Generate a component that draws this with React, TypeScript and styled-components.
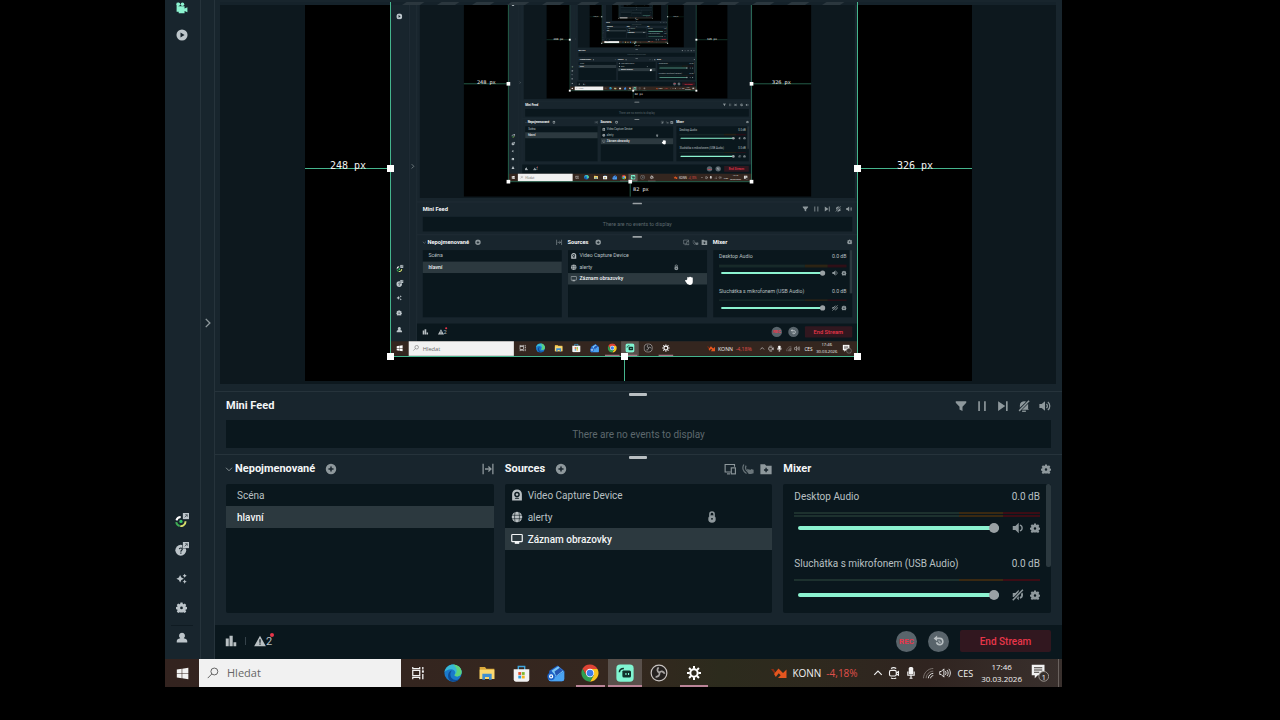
import React from 'react';
import styled, { createGlobalStyle } from 'styled-components';

const color = {
  base: '#18252d',
  section: '#0a171d',
  display: '#0d181e',
  line: '#26333b',
  selected: '#2c393f',
  title: '#f4f6f7',
  text: '#b9c0c3',
  icon: '#8e989c',
  navIcon: '#bcc5ca',
  teal: '#8cf3d0',
  guide: '#45b48d',
  knob: '#9aa1a4',
  red: '#e8364a',
};

const ui = "Roboto, 'Liberation Sans', sans-serif";
const taskFont = "'Open Sans', 'Noto Sans', sans-serif";
const mono = "'DejaVu Sans Mono', 'Liberation Mono', monospace";

const GlobalStyle = createGlobalStyle`
  *, *::before, *::after { box-sizing: border-box; }
  body { margin: 0; background: #000; font-family: ${ui}; }
  button, input { font: inherit; color: inherit; }
  button { border: 0; padding: 0; background: none; cursor: pointer; }
  h2, ul, p { margin: 0; padding: 0; }
  ul { list-style: none; }
  svg { display: block; flex: none; }
`;

/* ---------- icons ---------- */

type IconProps = { size?: number; x?: number; y?: number; color?: string };

const makeIcon = (box: number, content: React.ReactNode) =>
  function Icon({ size = 12, x, y, color: c }: IconProps) {
    return (
      <svg x={x} y={y} width={size} height={size} viewBox={`0 0 ${box} ${box}`} fill="currentColor" color={c} aria-hidden="true">
        {content}
      </svg>
    );
  };

const Camera = makeIcon(16, (
  <>
    <circle cx="3.2" cy="3" r="2.4" />
    <circle cx="8.6" cy="3" r="2.4" />
    <path d="M.8 1h2.400v5H.8zM.8 5.500h10.600v3l3.800-1.500v6.600l-3.800-1.500V15H3.600v-2H.8z" />
  </>
));
const PlayCircle = makeIcon(16, <path fillRule="evenodd" d="M8 .6a7.4 7.4 0 1 0 0 14.8A7.4 7.4 0 0 0 8 .6zM6 4.6 11.4 8 6 11.4z" />);
const ExternalBox = (
  <>
    <rect x="9" y="0" width="7" height="7" />
    <path d="M11 5l3-3m-2.4 0H14v2.4" stroke="#4a565d" strokeWidth="1" fill="none" />
  </>
);
const Orbit = makeIcon(16, (
  <>
    <path d="M1.6 8.4A5.4 5.4 0 0 1 6.5 4.6" fill="none" stroke="#fff" strokeWidth="2.2" />
    <path d="M1.4 10.4a5.4 5.4 0 0 0 4 4.4" fill="none" stroke="#3fae55" strokeWidth="2.2" />
    <path d="M6 15a5.4 5.4 0 0 0 6-5.6" fill="none" stroke="#d8e06c" strokeWidth="2.2" />
    <circle cx="6.8" cy="9.6" r="1.9" fill="#35c568" />
    {ExternalBox}
  </>
));
const Help = makeIcon(16, (
  <>
    <circle cx="6.6" cy="9.4" r="6.2" />
    <path d="M5 8.2c.2-2 3.6-1.7 3.300.2C8.100 9.500 6.700 9.500 6.700 11m0 1v1.300" stroke="#18252d" strokeWidth="1.300" fill="none" />
    <rect x="8.400" y="-.6" width="8" height="8" fill="#18252d" />
    {ExternalBox}
  </>
));
const Sparkles = makeIcon(16, (
  <path d="M6 3 7.800 6.600 11.400 8.400 7.800 10.200 6 13.800 4.200 10.200.6 8.400 4.200 6.600zM12.600 1l1 2 2 1-2 1-1 2-1-2-2-1 2-1zM12.600 9.600l1 2 2 1-2 1-1 2-1-2-2-1 2-1z" />
));
const Gear = makeIcon(16, (
  <path fillRule="evenodd" d="M6.500 .8h3l.5 2 1 .4 1.800-1.100 2.100 2.100-1.100 1.800.4 1 2 .5v3l-2 .5-.4 1 1.100 1.800-2.100 2.100L11 14.800l-1 .4H6l-1-.4-1.800 1.100-2.100-2.100L2.200 12l-.4-1-2-.5v-3l2-.5.4-1L1.100 4.200l2.100-2.100L5 3.200l1-.4zM8 6.600a2 2 0 1 0 0 4 2 2 0 0 0 0-4z" />
));
const Person = makeIcon(16, <path d="M8 1a4 4 0 0 1 2.400 7.200C13.400 8.800 15 10.200 15 12v2H1v-2c0-1.800 1.600-3.200 4.600-3.800A4 4 0 0 1 8 1z" />);
const ChevronRight = makeIcon(16, <path d="M5 2.500 10.500 8 5 13.500" fill="none" stroke="currentColor" strokeWidth="1.800" />);
const ChevronDown = makeIcon(16, <path d="M2 5.500 8 11.500 14 5.500" fill="none" stroke="currentColor" strokeWidth="1.800" />);
const PlusCircle = makeIcon(16, <path fillRule="evenodd" d="M8 1a7 7 0 1 0 0 14A7 7 0 0 0 8 1zM7 4.600h2V7h2.400v2H9v2.400H7V9H4.600V7H7z" />);
const FitWidth = makeIcon(16, <path d="M1.500 1v14M14.500 1v14M4 8h7.500M8.500 4.600 12 8l-3.500 3.400" fill="none" stroke="currentColor" strokeWidth="1.700" />);
const DualScreen = makeIcon(16, (
  <>
    <path d="M9 12H1.500V2H14v3" fill="none" stroke="currentColor" strokeWidth="1.500" />
    <path d="M4 14.500h4" stroke="currentColor" strokeWidth="1.500" />
    <rect x="9.700" y="6.500" width="5.500" height="8" fill="none" stroke="currentColor" strokeWidth="1.500" />
  </>
));
const Broadcast = makeIcon(16, (
  <>
    <path d="M2.500 2C0 6 1 11 6 14M5.500 3.500c-1.500 3-.5 6 2 8" fill="none" stroke="currentColor" strokeWidth="1.600" />
    <path d="M7 7.500l2 1 3 .5v-1l3.500 1v4.500L12 14.500H9L7 12z" />
  </>
));
const FolderPlus = makeIcon(16, <path fillRule="evenodd" d="M.5 1.500h6l1.800 2h7.200v11.500H.5zM7.200 6.400v2H5.300v1.800h1.900v2H9v-2h1.900V8.400H9v-2z" />);
const Funnel = makeIcon(16, <path d="M1 1.500h14v2.200L10 9v5.500l-4-2V9L1 3.700z" />);
const Pause = makeIcon(16, <path d="M3 1.500h2.200v13H3zM10.800 1.500H13v13h-2.200z" />);
const SkipNext = makeIcon(16, <path d="M1.500 1.500 11 8l-9.500 6.500zM12 1.500h2.200v13H12z" />);
const AlertOff = makeIcon(16, (
  <>
    <path d="M2.500 12V7c0-6 9-7.500 11-2v7l1.300 1H2.500z" />
    <path d="M5.500 15h5" stroke="currentColor" strokeWidth="1.800" />
    <path d="M15.500.5.8 14.800" stroke="#18252d" strokeWidth="4" />
    <path d="M14.800 1 1.500 14.500" stroke="currentColor" strokeWidth="1.900" />
  </>
));
const Speaker = makeIcon(16, (
  <>
    <path d="M.5 5.300h3L8 1.800v12.400l-4.500-3.500h-3z" />
    <path d="M10 5.200c1.500 1.500 1.500 4.100 0 5.600M11.800 2.600c3.400 2.600 3.400 8.200 0 10.800" fill="none" stroke="currentColor" strokeWidth="1.700" />
  </>
));
const SpeakerOne = makeIcon(16, (
  <>
    <path d="M1 5.300h3.500L9 1v14l-4.500-4.300H1z" />
    <path d="M10.500 4.200c4 1 4 6.600 0 7.600" fill="none" stroke="currentColor" strokeWidth="1.800" />
  </>
));
const SpeakerOff = makeIcon(16, (
  <>
    <path d="M1 5.300h3.500L9 1v14l-4.500-4.300H1z" />
    <path d="M10.500 4.200c4 1 4 6.600 0 7.600" fill="none" stroke="currentColor" strokeWidth="2.400" />
    <path d="M15 .5.5 15.500" stroke="#0a171d" strokeWidth="4" />
    <path d="M14.500 1 1 15" stroke="currentColor" strokeWidth="2" />
  </>
));
const Webcam = makeIcon(16, <path fillRule="evenodd" d="M8 .8c3.800 0 6.500 2.500 6.500 6v8.400h-13V6.800c0-3.500 2.700-6 6.500-6zm0 2.800a3.700 3.700 0 1 0 0 7.400 3.700 3.700 0 0 0 0-7.400zm0 1.900a1.800 1.800 0 1 1 0 3.600 1.800 1.800 0 0 1 0-3.600zM5 13h6l-1-1.200H6z" />);
const Globe = makeIcon(16, (
  <>
    <circle cx="8" cy="8" r="7" />
    <path d="M1 5.700h14M1 10.300h14M5.500 1.500C4.500 5 4.500 11 5.500 14.500M10.500 1.500c1 3.500 1 9.500 0 13" fill="none" stroke="#0a171d" strokeWidth=".8" />
  </>
));
const Monitor = makeIcon(16, (
  <>
    <rect x="1" y="2" width="14" height="9.500" rx="1" fill="none" stroke="currentColor" strokeWidth="1.600" />
    <path d="M5 12h6v2.500H5z" />
  </>
));
const Lock = makeIcon(16, (
  <>
    <path d="M5.200 6.500V4.200a2.800 2.800 0 0 1 5.600 0v2.300" fill="none" stroke="currentColor" strokeWidth="2" />
    <path fillRule="evenodd" d="M8 5.500a5 5 0 1 1 0 10 5 5 0 0 1 0-10zM8 9.200a1.300 1.300 0 1 0 0 2.600 1.300 1.300 0 0 0 0-2.600z" />
  </>
));
const Bars = makeIcon(16, <path d="M1 4.500h4V15H1zM6 1h4.300v14H6zM11.300 9.500H15V15h-3.700z" />);
const Warning = makeIcon(16, <path fillRule="evenodd" d="M8 1 15.800 15H.2zM7.200 5.800v4.500h1.600V5.800zm0 5.500v1.700h1.600v-1.700z" />);
const Replay = makeIcon(16, (
  <>
    <path d="M3 4.500h6a4.200 4.200 0 1 1-4.200 5.200" fill="none" stroke="currentColor" strokeWidth="2.200" />
    <path d="M5.500.8v7.400L.8 4.500z" />
    <path d="M8 7v2.500h2.500" fill="none" stroke="currentColor" strokeWidth="1.300" />
  </>
));

const Windows = makeIcon(16, <path d="M1 3.100 7 2.200v5.400H1zM7.700 2.100 15.200 1v6.600H7.700zM1 8.300h6v5.400l-6-.9zM7.700 8.300h7.500V15l-7.500-1.100z" />);
const Search = makeIcon(16, (
  <>
    <circle cx="9.800" cy="6" r="4.600" fill="none" stroke="currentColor" strokeWidth="1.200" />
    <path d="M6.400 9.300 1 14.800" stroke="currentColor" strokeWidth="1.200" />
  </>
));
const TaskView = makeIcon(16, (
  <>
    <path d="M2 1v2h8V1M2 15v-2h8v2" fill="none" stroke="currentColor" strokeWidth="1.400" />
    <rect x="2" y="5" width="8" height="6" fill="none" stroke="currentColor" strokeWidth="1.400" />
    <path d="M13.500 1v3M13.500 9v6" stroke="currentColor" strokeWidth="1.500" />
    <rect x="12.500" y="5" width="2.200" height="2.600" />
  </>
));
const Edge = makeIcon(24, (
  <>
    <circle cx="12" cy="12" r="11.500" fill="#1a79cb" />
    <path d="M.6 11C1.800 4 7 .5 12 .5c6.800 0 11.500 5 11.500 10.200 0 4-3 5.800-5.800 5.800-2.600 0-3.900-1-3.500-2.300.5-1 .8-1.500.8-2.900 0-2.500-2.600-4.300-5.500-4.300C5.500 7 2 8.800.6 11z" fill="#37b9d6" />
    <path d="M12 .5c6.800 0 11.500 5 11.500 10.200 0 4-3 5.800-5.800 5.800-2.600 0-3.900-1-3.500-2.300C18 12 18.500 5 12 .5z" fill="#5fd37a" />
    <path d="M8.500 13c-.5 4.500 3 8.500 7.800 8.200 2.400 0 4-1 5-2-2 3-5.500 4.600-9.600 4.200C7.500 22.700 5 19 5.500 14.500 6 11 8.500 9 10.500 8.800 9.500 9.800 8.700 11.200 8.500 13z" fill="#0d4c97" />
  </>
));
const Folder = makeIcon(24, (
  <>
    <path d="M1 3h8l2 2.500h12V21H1z" fill="#dba93a" />
    <path d="M1 7h22v14H1z" fill="#f9d871" />
    <path d="M5 13h14v9h-4v-4H9v4H5z" fill="#3f8fd2" />
  </>
));
const Store = makeIcon(24, (
  <>
    <path d="M7.500 7V2h9v5" fill="none" stroke="#41a5dc" strokeWidth="2" />
    <path d="M1 6h22v14.500a3 3 0 0 1-3 3H4a3 3 0 0 1-3-3z" fill="#f3f3f3" />
    <path d="M7.500 10h4v4h-4z" fill="#e0512c" />
    <path d="M12.500 10h4v4h-4z" fill="#7db82f" />
    <path d="M7.500 15h4v4h-4z" fill="#2b9fe0" />
    <path d="M12.500 15h4v4h-4z" fill="#f3b51d" />
  </>
));
const Mail = makeIcon(24, (
  <>
    <path d="M3 9 14 2l9 7v11a3 3 0 0 1-3 3H5a3 3 0 0 1-3-3z" fill="#1f5fc4" />
    <path d="M6 9 15 3l7 7-10 7z" fill="#7cc8f5" />
    <path d="M10 10l7-5 4 4-9 7z" fill="#2457b5" />
    <path d="M3 13l9 4L23 9.500V20a3 3 0 0 1-3 3H5a3 3 0 0 1-3-3z" fill="#4aa3f2" />
    <circle cx="5.500" cy="16.500" r="5" fill="#1c63c9" />
    <circle cx="5.500" cy="16.500" r="2" fill="none" stroke="#fff" strokeWidth="1.600" />
  </>
));
const Chrome = makeIcon(24, (
  <>
    <path d="M2 6.300a11.500 11.500 0 0 1 20 .2H12L7 15z" fill="#df4435" />
    <path d="M22 6.500A11.500 11.500 0 0 1 12 23.500L17 14.800 12 6.500z" fill="#f9c51f" />
    <path d="M12 23.500A11.500 11.500 0 0 1 2 6.300L7 15h10z" fill="#2e9e50" />
    <circle cx="12" cy="12" r="5.600" fill="#fff" />
    <circle cx="12" cy="12" r="4.500" fill="#3d7de8" />
  </>
));
const Streamlabs = makeIcon(24, (
  <>
    <rect x=".5" y=".5" width="23" height="23" rx="5" fill="#80f5d2" />
    <path d="M4.500 11c0-3.500 2.500-5 6-5" fill="none" stroke="#12302b" strokeWidth="2" />
    <path d="M9.500 8.500h8.500a2 2 0 0 1 2 2v5.500a2 2 0 0 1-2 2h-7.500a2 2 0 0 1-2-2v-6.500z" fill="#12302b" />
    <path d="M12.500 12h1.500v2.500h-1.500zM16 12h1.500v2.500H16z" fill="#80f5d2" />
  </>
));
const Obs = makeIcon(24, (
  <>
    <circle cx="12" cy="12" r="10.500" fill="#25211f" stroke="#c9c4c2" strokeWidth="1.600" />
    <path d="M12.500 11.500C9.500 10.500 9 7 11.500 4.500M12.500 11.500c2-2.500 5.500-2 7 1.500M12.500 11.500c1 3-1.500 6-5 5.500" fill="none" stroke="#a9a5a3" strokeWidth="2.400" />
  </>
));
const Settings = makeIcon(24, (
  <>
    <circle cx="12" cy="12" r="5.500" fill="none" stroke="#fff" strokeWidth="3" />
    <path d="M12 1.500v4M12 18.500v4M1.500 12h4M18.500 12h4M4.600 4.600l2.800 2.800M16.600 16.600l2.800 2.800M4.600 19.400l2.800-2.800M16.600 7.400l2.800-2.800" stroke="#fff" strokeWidth="3" />
  </>
));
const Stock = makeIcon(16, (
  <>
    <path d="M0 4h2.500L5 8H3z" fill="#8c2c12" />
    <path d="M3 9 7.500 3.500 12 8l3.500-3.500V13H7l2.700-2.700L7.700 8.300 4.800 12z" fill="#e4561f" />
  </>
));
const ChevronUp = makeIcon(16, <path d="M2 11 8 5l6 6" fill="none" stroke="currentColor" strokeWidth="1.800" />);
const MeetNow = makeIcon(16, (
  <>
    <rect x="2" y="4.500" width="9" height="7.500" rx="2" fill="none" stroke="currentColor" strokeWidth="1.500" />
    <path d="M11 8l3-2v5l-3-2M4 2c2-1.300 5-1.300 7 0M4 14.500c2 1.300 5 1.300 7 0" fill="none" stroke="currentColor" strokeWidth="1.400" />
  </>
));
const Mic = makeIcon(16, (
  <>
    <rect x="5" y="0" width="6" height="10" rx="2" />
    <path d="M3.800 6v5h8.400V6M8 11v4M6 15h4" fill="none" stroke="currentColor" strokeWidth="1.600" />
  </>
));
const Wifi = makeIcon(16, (
  <>
    <path d="M2 15C2 8 8 2 15 2M5.500 15c0-5 4.500-9.500 9.500-9.500" fill="none" stroke="#857d78" strokeWidth="1.200" />
    <path d="M8.500 15C8.500 11.500 11.500 8.500 15 8.500M11.500 15c0-2 1.500-3.500 3.500-3.500" fill="none" stroke="currentColor" strokeWidth="1.200" />
  </>
));
const Volume = makeIcon(16, (
  <>
    <path d="M1 6h2l3.500-3.500v11L3 10H1z" fill="none" stroke="currentColor" strokeWidth="1.200" />
    <path d="M8.500 5.500c1.200 1.500 1.200 3.500 0 5M10.700 4c2 2.300 2 5.700 0 8M13 2.500c2.800 3 2.800 8 0 11" fill="none" stroke="currentColor" strokeWidth="1.200" />
  </>
));
const Notice = makeIcon(24, (
  <>
    <path d="M1 1h17v14H9l-4 4v-4H1z" />
    <path d="M4 5h11M4 8h11M4 11h7" stroke="#37302c" strokeWidth="1.300" />
    <circle cx="17" cy="16.500" r="6.500" fill="#37302c" stroke="#a59f9b" strokeWidth="1.200" />
  </>
));
const Hand = makeIcon(16, <path d="M4 6.500V4c0-1.300 1.600-1.300 1.800 0C6 2 7.600 2 8 3.400 8.500 2 10.300 2.200 10.500 4c.4-1 2-.8 2 .7v5.800c0 3-2 4.500-4.500 4.500C5 15 4 13.500 2.500 11.500L.8 9C.5 7.800 1.700 7.200 2.600 8z" />);

/* ---------- shared content ---------- */

const scenes = [
  { name: 'Scéna', on: false },
  { name: 'hlavní', on: true },
];
const sources = [
  { name: 'Video Capture Device', Icon: Webcam, on: false, locked: false },
  { name: 'alerty', Icon: Globe, on: false, locked: true },
  { name: 'Záznam obrazovky', Icon: Monitor, on: true, locked: false },
];
const channels = [
  { name: 'Desktop Audio', bars: 2, muted: false },
  { name: 'Sluchátka s mikrofonem (USB Audio)', bars: 1, muted: true },
];
const feedTools = [
  { label: 'Filter', Icon: Funnel },
  { label: 'Pause', Icon: Pause },
  { label: 'Skip', Icon: SkipNext },
  { label: 'Mute alerts', Icon: AlertOff },
  { label: 'Volume', Icon: Speaker },
];
const navTop = [
  { label: 'Editor', Icon: Camera, tint: color.teal },
  { label: 'Recordings', Icon: PlayCircle, tint: color.navIcon },
];
const navBottom = [
  { label: 'Dashboard', Icon: Orbit, size: 14 },
  { label: 'Help', Icon: Help, size: 14 },
  { label: 'AI', Icon: Sparkles, size: 11 },
  { label: 'Settings', Icon: Gear, size: 11 },
];
const apps = [
  { label: 'Task view', Icon: TaskView, size: 14, state: '' },
  { label: 'Edge', Icon: Edge, size: 18, state: '' },
  { label: 'Explorer', Icon: Folder, size: 16, state: '' },
  { label: 'Store', Icon: Store, size: 17, state: '' },
  { label: 'Mail', Icon: Mail, size: 18, state: '' },
  { label: 'Chrome', Icon: Chrome, size: 18, state: 'open' },
  { label: 'Streamlabs', Icon: Streamlabs, size: 18, state: 'active' },
  { label: 'OBS', Icon: Obs, size: 18, state: '' },
  { label: 'Settings', Icon: Settings, size: 16, state: 'open' },
];

/* ---------- editor canvas: the captured desktop shows itself, level after level ---------- */

const DEPTH = 5;
const HANDLES = [[222, 165], [689, 165], [222, 353], [456, 353], [689, 353]];

function Stage({ level }: { level: number }) {
  /* in the captured frames the source still sits 4px higher on its canvas */
  const lift = level > 0 ? 4 : 0;
  return (
    <>
      <rect x="55" y="2" width="836" height="382" fill={color.display} />
      <rect x="140" y="5" width="667" height="376" fill="#000" />
      {level < DEPTH && (
        <svg x="226" y={-2 - lift} width="467" height="358" viewBox="0 0 897 687">
          <CapturedDesktop level={level + 1} />
        </svg>
      )}
      <rect x="55" y="2" width="836" height="3" fill="#15222a" />
      {Array.from({ length: 13 }, (_, i) => (
        <path key={i} d={`M${243 + i * 35} 1h18l-6 4h-18z`} fill="#2b373e" />
      ))}
      <g transform={`translate(0 ${-lift})`}>
        <path
          d={`M225.500 2V356.500H692.500V2M140 168.500H226M693 168.500H807M459.500 356V${381 + lift}`}
          fill="none"
          stroke={color.guide}
          shapeRendering={level ? 'auto' : 'crispEdges'}
        />
        {HANDLES.map(([x, y]) => (
          <rect key={`${x}-${y}`} x={x} y={y} width="7" height="7" fill="#fff" />
        ))}
        {level < DEPTH && (
          <g fill="#f2f2f2" fontFamily={mono} fontSize="10">
            <text x="165" y="169">248 px</text>
            <text x="732" y="169">326 px</text>
            {level > 0 && <text x="465" y="374">82 px</text>}
          </g>
        )}
      </g>
    </>
  );
}

function CapturedTexts() {
  return (
    <>
      <g fill={color.title} fontFamily={ui} fontSize="11" fontWeight="700">
        <text x="61" y="409">Mini Feed</text>
        <text x="70" y="472">Nepojmenované</text>
        <text x="339" y="472">Sources</text>
        <text x="618" y="472">Mixer</text>
      </g>
      <text x="473" y="438" fill="#5d686d" fontFamily={ui} fontSize="10" textAnchor="middle">There are no events to display</text>
      <g fontFamily={ui} fontSize="10" fill={color.text}>
        {scenes.map(({ name, on }, i) => (
          <text key={name} x="72" y={498 + i * 22} fill={on ? color.title : undefined} fontWeight={on ? 500 : 400}>{name}</text>
        ))}
        {sources.map(({ name, on }, i) => (
          <text key={name} x="362" y={498 + i * 22} fill={on ? color.title : undefined} fontWeight={on ? 500 : 400}>{name}</text>
        ))}
        {channels.map(({ name }, i) => (
          <React.Fragment key={name}>
            <text x="630" y={500 + i * 67}>{name}</text>
            <text x="875" y={500 + i * 67} textAnchor="end">0.0 dB</text>
          </React.Fragment>
        ))}
      </g>
      <text x="101" y="645" fill={color.text} fontFamily={ui} fontSize="11">2</text>
      <text x="741" y="644" fill={color.red} fontFamily={ui} fontSize="8" fontWeight="700" textAnchor="middle">REC</text>
      <text x="840" y="645" fill={color.red} fontFamily={ui} fontSize="11" fontWeight="500" textAnchor="middle">End Stream</text>
      <text x="61" y="677" fill="#666" fontFamily={taskFont} fontSize="11">Hledat</text>
      <g fill="#f2f2f2" fontFamily={taskFont} fontSize="10">
        <text x="628" y="677">KONN</text>
        <text x="662" y="677" fill="#e0504b">-4,18%</text>
        <text x="794" y="677" fontSize="9">CES</text>
        <text x="837" y="669" fontSize="8" textAnchor="middle">17:46</text>
        <text x="837" y="682" fontSize="8" textAnchor="middle">30.03.2026</text>
      </g>
    </>
  );
}

function CapturedDesktop({ level }: { level: number }) {
  return (
    <>
      <rect width="897" height="687" fill={color.base} />
      <path d="M35.500 0V659M49.500 0V659M50 391.500H897M50 454.500H897" stroke={color.line} fill="none" />
      {navTop.map(({ label, Icon, tint }, i) => <Icon key={label} x={10} y={2 + i * 27} color={tint} />)}
      {navBottom.map(({ label, Icon, size }, i) => <Icon key={label} x={10} y={512 + i * 29} size={size} color={color.navIcon} />)}
      <Person x={10} y={631} color={color.navIcon} />
      <ChevronRight x={36} y={317} color={color.icon} />

      <svg x="55" y="2" width="836" height="382" viewBox="55 2 836 382">
        <Stage level={level} />
      </svg>

      <g fill={color.section}>
        <rect x="61" y="420" width="825" height="28" />
        <rect x="61" y="484" width="267" height="129" />
        <rect x="340" y="484" width="267" height="129" />
        <rect x="619" y="484" width="267" height="129" />
        <rect x="50" y="625" width="847" height="34" />
      </g>
      <g fill={color.knob}>
        <rect x="464" y="393" width="18" height="3" rx="1" />
        <rect x="464" y="457" width="18" height="3" rx="1" />
      </g>
      {feedTools.map(({ label, Icon }, i) => <Icon key={label} x={790 + i * 21} y={399} color={color.icon} />)}
      <PlusCircle x={161} y={463} color={color.icon} />
      <PlusCircle x={392} y={463} color={color.icon} />
      <ChevronDown x={60} y={465} size={8} color={color.icon} />
      <FitWidth x={317} y={463} color={color.icon} />
      <DualScreen x={561} y={463} color={color.icon} />
      <Broadcast x={579} y={463} color="#6a757a" />
      <FolderPlus x={596} y={463} color={color.icon} />
      <Gear x={876} y={463} size={10} color={color.icon} />

      <rect x="61" y="506" width="267" height="22" fill={color.selected} />
      <rect x="340" y="528" width="267" height="22" fill={color.selected} />
      {sources.map(({ name, Icon, locked }, i) => (
        <React.Fragment key={name}>
          <Icon x={345} y={489 + i * 22} color={color.text} />
          {locked && <Lock x={542} y={489 + i * 22} color={color.icon} />}
        </React.Fragment>
      ))}
      {channels.map(({ name, bars, muted }, i) => (
        <g key={name} transform={`translate(0 ${i * 67})`}>
          {Array.from({ length: bars }, (_, b) => (
            <React.Fragment key={b}>
              <rect x="630" y={512 + b * 3} width="165" height="2" fill="#1d312e" />
              <rect x="795" y={512 + b * 3} width="44" height="2" fill="#3a2912" />
              <rect x="839" y={512 + b * 3} width="36" height="2" fill="#3c0d15" />
            </React.Fragment>
          ))}
          <rect x="634" y="526" width="195" height="4" rx="2" fill={color.teal} />
          <circle cx="829" cy="528" r="5" fill={color.knob} />
          {muted ? <SpeakerOff x={847} y={522} color={color.icon} /> : <SpeakerOne x={847} y={522} color={color.icon} />}
          <Gear x={865} y={523} size={10} color={color.icon} />
        </g>
      ))}
      <rect x="881" y="484" width="5" height="83" fill={color.selected} />

      <Bars x={60} y={635} color={color.text} />
      <Warning x={90} y={635} color={color.text} />
      <circle cx="106" cy="634" r="2" fill={color.red} />
      <circle cx="741" cy="641" r="10" fill="#59646b" />
      <circle cx="773" cy="641" r="10" fill="#59646b" />
      <Replay x={767} y={635} color={color.text} />
      <rect x="795" y="630" width="91" height="22" rx="2" fill="#31171f" />

      <rect y="659" width="897" height="28" fill="#34261f" />
      <rect x="34" y="659" width="202" height="28" fill="#f1f1f1" />
      <Windows x={10} y={666} size={13} color="#fff" />
      <Search x={42} y={666} color="#555" />
      {apps.map(({ label, Icon, size, state }, i) => {
        const center = Math.round(253 + i * 34.4);
        return (
          <React.Fragment key={label}>
            {state === 'active' && <rect x={center - 17} y="659" width="34" height="28" fill="#59504b" />}
            {state && <rect x={center - 14} y="685" width="28" height="2" fill="#bb8598" />}
            <Icon x={center - size / 2} y={672 - size / 2} size={size} color="#e8e8e8" />
          </React.Fragment>
        );
      })}
      <Stock x={607} y={665} size={16} />
      <ChevronUp x={708} y={668} size={10} color="#eee" />
      <MeetNow x={724} y={667} color="#eee" />
      <Mic x={740} y={667} color="#fff" />
      <Wifi x={758} y={667} color="#eee" />
      <Volume x={774} y={667} color="#eee" />
      <Notice x={867} y={665} size={18} color="#fff" />
      {level < DEPTH && <CapturedTexts />}
      <Hand x={564} y={532} size={20} color="#fff" />
    </>
  );
}

/* ---------- page ---------- */

const Screen = styled.div`
  display: grid;
  grid-template-columns: minmax(0, 165fr) minmax(720px, 897fr) minmax(0, 218fr);
  min-height: 100vh;
  padding-bottom: 33px;
  background: #000;
`;
const Desktop = styled.div`
  grid-column: 2;
  display: flex;
  flex-direction: column;
  background: ${color.base};
`;
const Workspace = styled.div`
  display: flex;
  flex: 1;
`;
const Nav = styled.nav`
  display: flex;
  flex-direction: column;
  align-items: center;
  width: 36px;
  padding: 2px 2px 15px 0;
  border-right: 1px solid ${color.line};
  color: ${color.navIcon};
`;
const NavGroup = styled.div<{ $gap: number; $end?: boolean }>`
  display: flex;
  flex-direction: column;
  gap: ${(p) => p.$gap}px;
  margin-top: ${(p) => (p.$end ? 'auto' : 0)};
`;
const NavRule = styled.hr`
  width: 22px;
  margin: 11px 0 6px;
  border: 0;
  border-top: 1px solid #0f1b22;
`;
const IconButton = styled.button<{ $tint?: string }>`
  display: flex;
  align-items: center;
  justify-content: center;
  color: ${(p) => p.$tint ?? 'inherit'};
`;
const NavButton = styled(IconButton)`
  height: 14px;
`;
const Strip = styled.div`
  display: flex;
  align-items: flex-start;
  justify-content: center;
  width: 14px;
  padding-top: 317px;
  border-right: 1px solid ${color.line};
  color: ${color.icon};
`;
const Main = styled.main`
  display: flex;
  flex: 1;
  flex-direction: column;
  min-width: 0;
  padding-top: 2px;
`;
const Canvas = styled.svg`
  flex: 1 1 0;
  min-height: 240px;
  margin: 0 6px 7px 5px;
`;
const Section = styled.section<{ $bottom: number }>`
  position: relative;
  padding: 0 11px ${(p) => p.$bottom}px;
  border-top: 1px solid ${color.line};

  &::before {
    content: '';
    position: absolute;
    top: 1px;
    left: 50%;
    width: 18px;
    height: 3px;
    margin-left: -10px;
    border-radius: 1px;
    background: #b9bfc2;
  }
`;
const Header = styled.header`
  display: flex;
  align-items: center;
  height: 28px;
  color: ${color.icon};
`;
const Title = styled.h2`
  font-size: 11px;
  line-height: 14px;
  font-weight: 700;
  color: ${color.title};
`;
const Tools = styled.div<{ $gap: number }>`
  display: flex;
  align-items: center;
  gap: ${(p) => p.$gap}px;
  margin-left: auto;
`;
const Add = styled(IconButton)`
  margin-left: 10px;
`;
const Collapse = styled(IconButton)`
  margin: 0 2px 0 -1px;
`;
const Feed = styled.p`
  display: flex;
  align-items: center;
  justify-content: center;
  height: 28px;
  background: ${color.section};
  font-size: 10px;
  color: #5d686d;
`;
const Columns = styled.div`
  display: grid;
  grid-template-columns: repeat(3, minmax(0, 1fr));
  gap: 11px;
`;
const PanelHeader = styled(Header)`
  margin-bottom: 1px;
`;
const Panel = styled.ul`
  position: relative;
  height: 129px;
  border-radius: 2px;
  background: ${color.section};
  overflow: hidden;
`;
const Row = styled.button<{ $on: boolean; $left: number }>`
  display: flex;
  align-items: center;
  gap: 5px;
  width: 100%;
  height: 22px;
  padding: 0 54px 0 ${(p) => p.$left}px;
  background: ${(p) => (p.$on ? color.selected : 'transparent')};
  font-size: 10px;
  font-weight: ${(p) => (p.$on ? 500 : 400)};
  color: ${(p) => (p.$on ? color.title : color.text)};
`;
const Locked = styled.span`
  margin-left: auto;
  color: ${color.icon};
`;
const Mixer = styled(Panel)`
  padding: 6px 11px 0;
`;
const Channel = styled.li`
  height: 67px;
`;
const Label = styled.label`
  display: flex;
  justify-content: space-between;
  margin-bottom: 8px;
  font-size: 10px;
  line-height: 14px;
  color: ${color.text};
`;
const Meter = styled.div`
  display: flex;
  flex-direction: column;
  gap: 1px;
  height: 5px;
`;
const MeterBar = styled.div`
  height: 2px;
  background: linear-gradient(90deg, #1d312e 67%, #3a2912 67% 85%, #3c0d15 85%);
`;
const Controls = styled.div`
  display: flex;
  align-items: center;
  gap: 6px;
  height: 12px;
  margin-top: 5px;
  padding-left: 4px;
  color: ${color.icon};
`;
const Fader = styled.input`
  flex: 1;
  min-width: 0;
  height: 10px;
  margin: 0 7px 0 0;
  appearance: none;
  background: none;

  &::-webkit-slider-runnable-track {
    height: 4px;
    border-radius: 2px;
    background: ${color.teal};
  }
  &::-webkit-slider-thumb {
    appearance: none;
    width: 10px;
    height: 10px;
    margin-top: -3px;
    border-radius: 50%;
    background: ${color.knob};
  }
`;
const ScrollThumb = styled.li`
  position: absolute;
  top: 0;
  right: 0;
  width: 5px;
  height: 83px;
  border-radius: 2px;
  background: ${color.selected};
`;
const Footer = styled.footer`
  display: flex;
  align-items: center;
  height: 34px;
  padding: 0 11px 2px 10px;
  background: ${color.section};
  color: ${color.text};
`;
const Divider = styled.span`
  width: 1px;
  height: 8px;
  margin: 0 8px;
  background: #35424a;
`;
const Alerts = styled(IconButton)`
  position: relative;
  font-size: 11px;

  &::after {
    content: '';
    position: absolute;
    top: -2px;
    right: -2px;
    width: 4px;
    height: 4px;
    border-radius: 50%;
    background: ${color.red};
  }
`;
const Round = styled(IconButton)`
  width: 21px;
  height: 21px;
  border-radius: 50%;
  background: #59646b;
  font-size: 8px;
  font-weight: 700;
`;
const EndStream = styled.button`
  width: 91px;
  height: 22px;
  border-radius: 2px;
  background: #31171f;
  font-size: 10px;
  font-weight: 500;
  color: ${color.red};
`;
const Taskbar = styled.footer`
  display: flex;
  height: 28px;
  background: linear-gradient(90deg, #33231f 0%, #35271f 50%, #2c2b1d 62%, #2e291e 72%, #302420 85%, #39302d 100%);
  font-family: ${taskFont};
  color: #f2f2f2;
`;
const Start = styled(IconButton)`
  width: 34px;
`;
const SearchBox = styled.label`
  display: flex;
  align-items: center;
  gap: 8px;
  width: 202px;
  padding: 0 0 1px 8px;
  background: #f1f1f1;
  color: #555;
`;
const SearchInput = styled.input`
  flex: 1;
  min-width: 0;
  padding: 0;
  border: 0;
  outline: 0;
  background: none;
  font-size: 11px;

  &::placeholder { color: #666; opacity: 1; }
`;
const Apps = styled.div`
  display: flex;
  width: 310px;
`;
const AppButton = styled(IconButton)<{ $state: string }>`
  position: relative;
  flex: 1;
  background: ${(p) => (p.$state === 'active' ? '#59504b' : 'transparent')};

  &::after {
    content: '';
    position: absolute;
    bottom: 0;
    left: ${(p) => (p.$state === 'active' ? 0 : 3)}px;
    right: ${(p) => (p.$state === 'active' ? 0 : 3)}px;
    height: 2px;
    background: ${(p) => (p.$state ? '#bb8598' : 'transparent')};
  }
`;
const Tray = styled.div`
  display: flex;
  align-items: center;
  margin-left: auto;
`;
const Ticker = styled.button`
  display: flex;
  align-items: center;
  gap: 5px;
  margin-right: 15px;
  font-size: 10px;
`;
const Change = styled.span`
  color: #e0504b;
`;
const Status = styled.div`
  display: flex;
  align-items: center;
  gap: 5px;
`;
const Language = styled.button`
  margin-left: 7px;
  font-size: 9px;
`;
const Clock = styled.time`
  margin: 0 9px 0 8px;
  font-size: 8px;
  line-height: 12px;
  text-align: center;
`;
const Notifications = styled(IconButton)`
  position: relative;
`;
const Count = styled.span`
  position: absolute;
  right: 3px;
  bottom: 0;
  font-size: 8px;
  line-height: 10px;
`;
const ShowDesktop = styled.button`
  align-self: stretch;
  width: 4px;
  margin-left: 9px;
  border-left: 1px solid #6a625e;
`;

export default function App() {
  return (
    <>
      <GlobalStyle />
      <Screen>
        <Desktop>
          <Workspace>
            <Nav aria-label="Main">
              <NavGroup $gap={15}>
                {navTop.map(({ label, Icon, tint }) => (
                  <IconButton key={label} aria-label={label} $tint={tint}><Icon /></IconButton>
                ))}
              </NavGroup>
              <NavGroup $gap={15} $end>
                {navBottom.map(({ label, Icon, size }) => (
                  <NavButton key={label} aria-label={label}><Icon size={size} /></NavButton>
                ))}
              </NavGroup>
              <NavRule />
              <IconButton aria-label="Account"><Person /></IconButton>
            </Nav>
            <Strip>
              <IconButton aria-label="Expand"><ChevronRight /></IconButton>
            </Strip>
            <Main>
              <Canvas viewBox="55 2 836 382" preserveAspectRatio="xMidYMax slice" role="img" aria-label="Scene preview">
                <Stage level={0} />
              </Canvas>

              <Section $bottom={6}>
                <Header>
                  <Title>Mini Feed</Title>
                  <Tools $gap={9}>
                    {feedTools.map(({ label, Icon }) => (
                      <IconButton key={label} aria-label={label}><Icon /></IconButton>
                    ))}
                  </Tools>
                </Header>
                <Feed>There are no events to display</Feed>
              </Section>

              <Section $bottom={12}>
                <Columns>
                  <div>
                    <PanelHeader>
                      <Collapse aria-label="Scene collections"><ChevronDown size={8} /></Collapse>
                      <Title>Nepojmenované</Title>
                      <Add aria-label="Add scene"><PlusCircle /></Add>
                      <Tools $gap={6}>
                        <IconButton aria-label="Transitions"><FitWidth /></IconButton>
                      </Tools>
                    </PanelHeader>
                    <Panel>
                      {scenes.map(({ name, on }) => (
                        <li key={name}><Row $on={on} $left={11}>{name}</Row></li>
                      ))}
                    </Panel>
                  </div>
                  <div>
                    <PanelHeader>
                      <Title>Sources</Title>
                      <Add aria-label="Add source"><PlusCircle /></Add>
                      <Tools $gap={6}>
                        <IconButton aria-label="Dual output"><DualScreen /></IconButton>
                        <IconButton aria-label="Selective recording" $tint="#6a757a"><Broadcast /></IconButton>
                        <IconButton aria-label="Add group"><FolderPlus /></IconButton>
                      </Tools>
                    </PanelHeader>
                    <Panel>
                      {sources.map(({ name, Icon, on, locked }) => (
                        <li key={name}>
                          <Row $on={on} $left={6}>
                            <Icon />
                            {name}
                            {locked && <Locked><Lock /></Locked>}
                          </Row>
                        </li>
                      ))}
                    </Panel>
                  </div>
                  <div>
                    <PanelHeader>
                      <Title>Mixer</Title>
                      <Tools $gap={6}>
                        <IconButton aria-label="Mixer settings"><Gear size={10} /></IconButton>
                      </Tools>
                    </PanelHeader>
                    <Mixer>
                      {channels.map(({ name, bars, muted }, i) => (
                        <Channel key={name}>
                          <Label htmlFor={`fader-${i}`}>
                            <span>{name}</span>
                            <span>0.0 dB</span>
                          </Label>
                          <Meter>
                            {Array.from({ length: bars }, (_, b) => <MeterBar key={b} />)}
                          </Meter>
                          <Controls>
                            <Fader id={`fader-${i}`} type="range" min={0} max={100} defaultValue={100} />
                            <IconButton aria-label="Mute">{muted ? <SpeakerOff /> : <SpeakerOne />}</IconButton>
                            <IconButton aria-label="Channel settings"><Gear size={10} /></IconButton>
                          </Controls>
                        </Channel>
                      ))}
                      <ScrollThumb aria-hidden="true" />
                    </Mixer>
                  </div>
                </Columns>
              </Section>

              <Footer>
                <IconButton aria-label="Performance"><Bars /></IconButton>
                <Divider />
                <Alerts aria-label="2 notifications"><Warning />2</Alerts>
                <Tools $gap={11}>
                  <Round $tint={color.red}>REC</Round>
                  <Round aria-label="Replay buffer"><Replay /></Round>
                  <EndStream>End Stream</EndStream>
                </Tools>
              </Footer>
            </Main>
          </Workspace>

          <Taskbar>
            <Start aria-label="Start"><Windows size={13} /></Start>
            <SearchBox>
              <Search />
              <SearchInput type="text" placeholder="Hledat" aria-label="Hledat" />
            </SearchBox>
            <Apps>
              {apps.map(({ label, Icon, size, state }) => (
                <AppButton key={label} aria-label={label} $state={state}><Icon size={size} /></AppButton>
              ))}
            </Apps>
            <Tray>
              <Ticker>
                <Stock size={16} />
                <span>KONN</span>
                <Change>-4,18%</Change>
              </Ticker>
              <Status>
                <ChevronUp size={10} />
                <MeetNow />
                <Mic />
                <Wifi />
                <Volume />
              </Status>
              <Language>CES</Language>
              <Clock>17:46<br />30.03.2026</Clock>
              <Notifications aria-label="Notifications">
                <Notice size={18} />
                <Count>1</Count>
              </Notifications>
              <ShowDesktop aria-label="Show desktop" />
            </Tray>
          </Taskbar>
        </Desktop>
      </Screen>
    </>
  );
}
